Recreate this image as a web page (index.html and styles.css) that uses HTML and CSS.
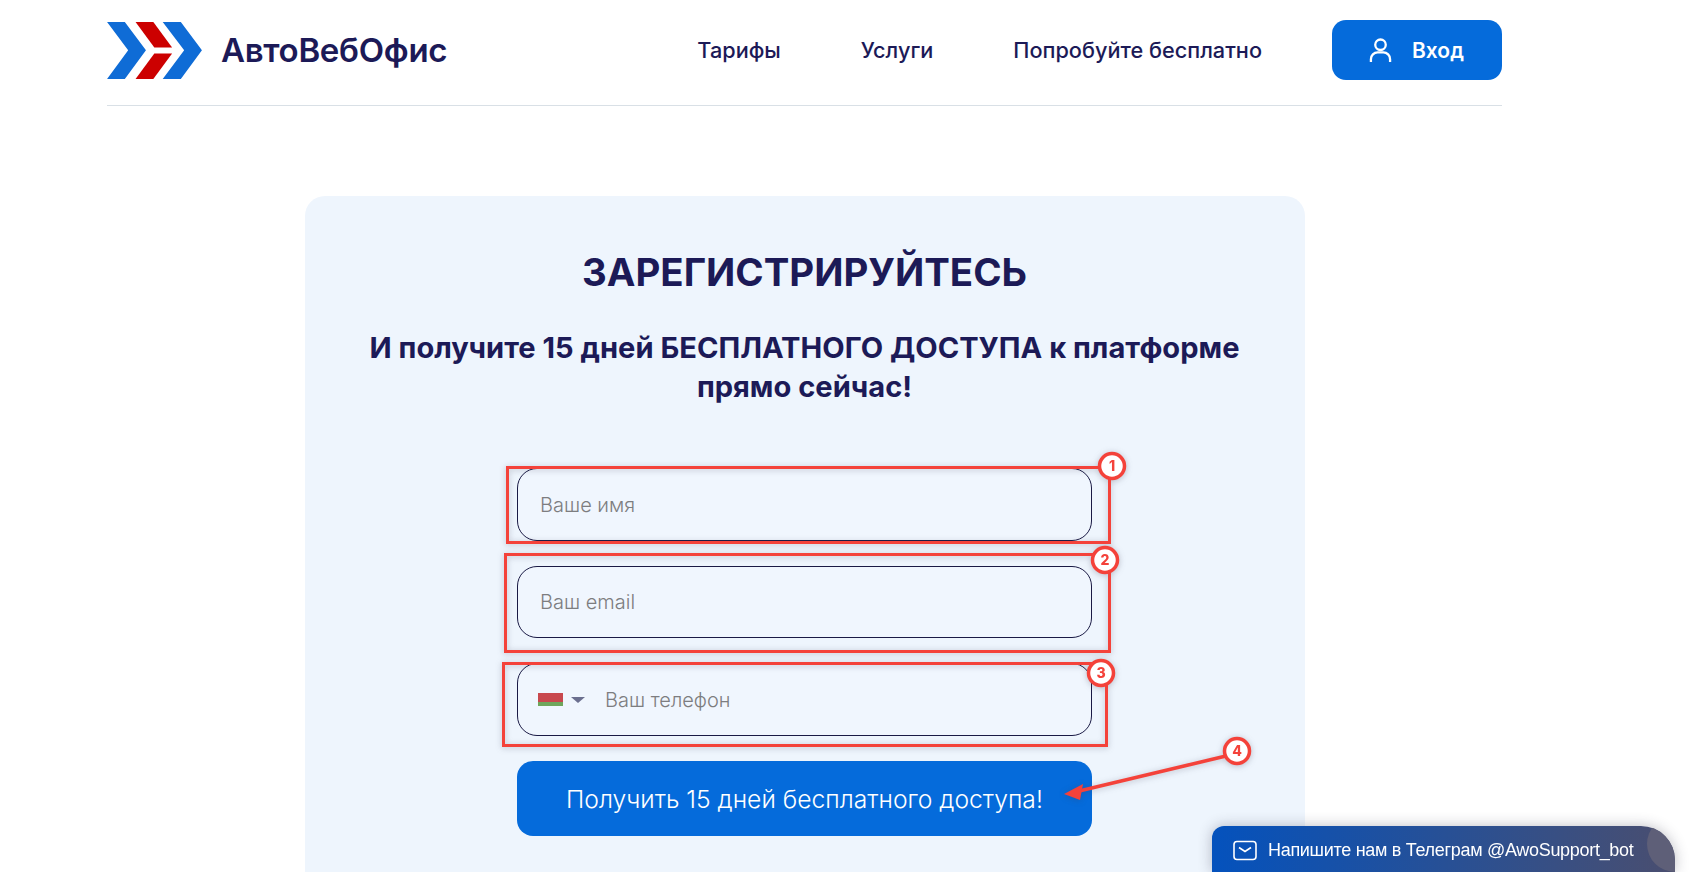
FILE: index.html

```html
<!DOCTYPE html>
<html lang="ru">
<head>
  <meta charset="UTF-8" />
  <title>АвтоВебОфис — регистрация</title>
  <link rel="stylesheet" href="styles.css">
</head>
<body>
  <div class="page">
    <header class="header">
      <a class="logo" href="#">
        <svg class="logo-mark" viewBox="52 66 283 170" aria-hidden="true">
          <polygon fill="#0f6cd6" points="52,66 105,66 168,150 105,236 52,236 115,150" />
          <polygon fill="#0f6cd6" points="218,66 272,66 335,150 272,236 218,236 282,150" />
          <polygon fill="#cc0000" points="137,66 190,66 246,142 193,142" />
          <polygon fill="#cc0000" points="193,160 246,160 190,236 137,236" />
        </svg>
        <span class="logo-text">АвтоВебОфис</span>
      </a>
      <nav class="nav">
        <a href="#">Тарифы</a>
        <a href="#">Услуги</a>
        <a href="#">Попробуйте бесплатно</a>
      </nav>
      <a class="login" href="#">
        <svg class="login-icon" viewBox="0 0 24 26" aria-hidden="true">
          <circle cx="12" cy="7" r="5.5" />
          <path d="M2 25v-3a7 7 0 0 1 7-7h6a7 7 0 0 1 7 7v3" />
        </svg>
        Вход
      </a>
    </header>

    <section class="card">
      <h1>ЗАРЕГИСТРИРУЙТЕСЬ</h1>
      <h2>И получите 15 дней БЕСПЛАТНОГО ДОСТУПА к платформе прямо сейчас!</h2>
      <form class="form">
        <input class="field tall" type="text" placeholder="Ваше имя" />
        <input class="field" type="text" placeholder="Ваш email" />
        <div class="field tall phone">
          <span class="flag"></span>
          <span class="caret"></span>
          <input type="text" placeholder="Ваш телефон" />
        </div>
        <button class="submit" type="button">Получить 15 дней бесплатного доступа!</button>
      </form>
    </section>
  </div>

  <!-- red marks drawn over the screenshot -->
  <svg class="marks" viewBox="0 0 1699 872" aria-hidden="true">
    <rect x="507.5" y="467.5" width="602" height="75" />
    <rect x="505.5" y="554.5" width="604" height="97" />
    <rect x="503.5" y="663.5" width="603" height="82" />
    <line x1="1226" y1="756" x2="1075" y2="792" />
    <polygon points="1064,794 1083,784 1080,800" />
    <g class="num"><circle cx="1112" cy="466" r="12.5" /><text x="1112" y="471">1</text></g>
    <g class="num"><circle cx="1105" cy="560" r="12.5" /><text x="1105" y="565">2</text></g>
    <g class="num"><circle cx="1101" cy="673" r="12.5" /><text x="1101" y="678">3</text></g>
    <g class="num"><circle cx="1237" cy="751" r="12.5" /><text x="1237" y="756">4</text></g>
  </svg>

  <a class="telegram" href="#">
    <svg class="mail-icon" viewBox="0 0 24 20" aria-hidden="true">
      <rect x="1" y="1" width="22" height="18" rx="3" />
      <path d="M6 7l6 4 6-4" />
    </svg>
    Напишите нам в Телеграм @AwoSupport_bot
  </a>
</body>
</html>
```

FILE: styles.css

```css
html, body { margin: 0; height: 872px; overflow: hidden; background: white; }
body { font-family: Inter, "Noto Sans", sans-serif; color: #1c1a57; }
a { color: inherit; text-decoration: none; }

.page { width: 1395px; margin-left: 107px; }

.header { display: flex; align-items: center; padding: 20px 0 25px; border-bottom: 1px solid #d9e0e6; }
.logo { display: flex; align-items: center; gap: 19px; }
.logo-mark { width: 95px; height: 57px; display: block; }
.logo-text { font-size: 33px; font-weight: 600; letter-spacing: -0.3px; }
.nav { display: flex; gap: 80px; margin-left: auto; font-size: 21.7px; font-weight: 500; }
.login { display: flex; align-items: center; gap: 20px; width: 170px; height: 60px; margin-left: 70px; padding-left: 37px; box-sizing: border-box; border-radius: 14px; background: #056bdb; color: white; font-size: 21px; font-weight: 600; }
.login-icon { width: 23px; height: 25px; fill: none; stroke: white; stroke-width: 2.4; }

.card { width: 1000px; height: 800px; margin: 90px auto 0; padding-top: 53px; box-sizing: border-box; border-radius: 20px; background: #eef5fd; text-align: center; }
.card h1 { margin: 0; font-size: 38.4px; line-height: 46px; font-weight: 700; }
.card h2 { max-width: 900px; margin: 33px auto 0; font-size: 29.1px; line-height: 39px; font-weight: 700; }

.form { display: flex; flex-direction: column; gap: 25px; width: 575px; margin: 62px auto 0; }
.field { height: 72px; box-sizing: border-box; padding: 0 22px; border: 1px solid #1a1a45; border-radius: 20px; background: #f0f6fe; font: 300 20px Inter, sans-serif; color: #1c1a57; outline: none; }
.tall { height: 73px; }
.field::placeholder, .phone input::placeholder { color: #7d7d80; }
.phone { display: flex; align-items: center; padding-left: 20px; }
.phone input { flex: 1; min-width: 0; margin-left: 20px; padding: 0; border: 0; background: none; font: inherit; color: inherit; outline: none; }
.flag { width: 25px; height: 13px; background: linear-gradient(#c8484e 0 66%, #6fa65c 66%); }
.caret { width: 0; height: 0; margin-left: 8px; border-style: solid; border-width: 6px 7px 0; border-color: #6b6f8f transparent transparent; }
.submit { height: 75px; border: 0; border-radius: 16px; background: #056bdb; color: white; font: 300 24.7px Inter, sans-serif; cursor: pointer; }

.marks { position: absolute; left: 0; top: 0; width: 1699px; height: 872px; pointer-events: none; filter: drop-shadow(0 1px 3px rgba(60, 60, 80, 0.3)); }
.marks rect { fill: none; stroke: #f4423a; stroke-width: 3; }
.marks line { stroke: #f4423a; stroke-width: 3.5; }
.marks polygon { fill: #f4423a; }
.num circle { fill: white; stroke: #f4423a; stroke-width: 3.5; }
.num text { fill: #f4423a; font: 800 14px Inter, sans-serif; text-anchor: middle; }

.telegram { position: fixed; right: 24px; bottom: 0; display: flex; align-items: center; gap: 11px; width: 463px; height: 46px; padding: 2px 0 0 21px; box-sizing: border-box; overflow: hidden; border-radius: 12px 34px 0 0; background: linear-gradient(90deg, #0452bd, #4a4e6f); color: white; font: 18px "Liberation Sans", Arial, sans-serif; letter-spacing: -0.3px; box-shadow: 0 0 14px rgba(40, 40, 60, 0.3); }
.telegram::after { content: ""; position: absolute; right: -28px; top: -10px; width: 56px; height: 56px; border-radius: 50%; background: #5e5f78; }
.mail-icon { width: 24px; height: 21px; fill: none; stroke: white; stroke-width: 1.6; }
```
